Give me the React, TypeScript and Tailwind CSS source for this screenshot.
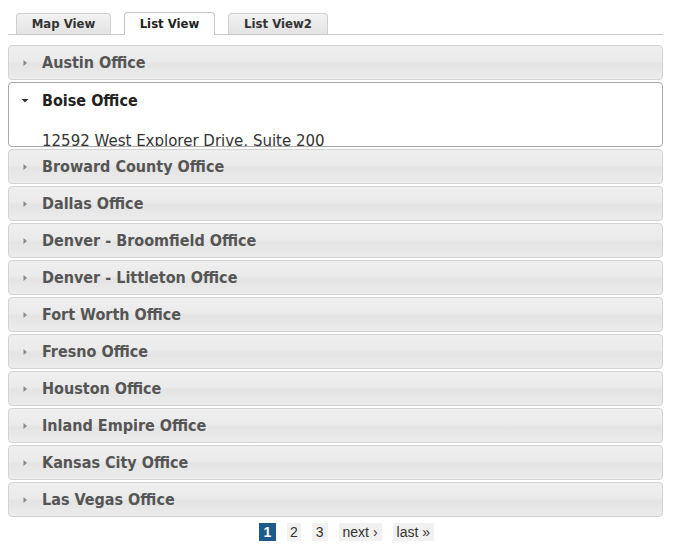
import React from "react";

const offices = [
  "Austin Office",
  "Boise Office",
  "Broward County Office",
  "Dallas Office",
  "Denver - Broomfield Office",
  "Denver - Littleton Office",
  "Fort Worth Office",
  "Fresno Office",
  "Houston Office",
  "Inland Empire Office",
  "Kansas City Office",
  "Las Vegas Office",
];

const cond = { fontFamily: '"DejaVu Sans Condensed", "DejaVu Sans", Verdana, sans-serif' };
const dv = { fontFamily: '"DejaVu Sans", Verdana, sans-serif' };

function RightTri() {
  return (
    <svg width="8" height="8" viewBox="0 0 8 8" className="shrink-0">
      <path d="M2.5 1 L6 4 L2.5 7 Z" fill="#8a8a8a" />
    </svg>
  );
}

function DownTri() {
  return (
    <svg width="8" height="8" viewBox="0 0 8 8" className="shrink-0">
      <path d="M0.5 2 L7.5 2 L4 5.5 Z" fill="#333" />
    </svg>
  );
}

export default function App() {
  return (
    <div className="w-[674px] h-[556px] bg-white" style={dv}>
      <div className="pl-[8px] pr-[11px] pt-[13px]">
        {/* Tabs */}
        <div className="flex items-end gap-[13px] pl-[8px] border-b border-[#c9c9c9] h-[22px]" style={cond}>
          <div className="h-[21px] w-[95px] flex items-center justify-center rounded-t-[4px] border border-b-0 border-[#cfcfcf] bg-gradient-to-b from-[#f2f2f2] to-[#e3e3e3] text-[13px] font-bold text-[#333]">
            Map View
          </div>
          <div className="h-[23px] w-[91px] -mb-px flex items-center justify-center rounded-t-[4px] border border-b-0 border-[#c4c4c4] bg-white text-[13px] font-bold text-[#222]">
            List View
          </div>
          <div className="h-[21px] w-[100px] flex items-center justify-center rounded-t-[4px] border border-b-0 border-[#cfcfcf] bg-gradient-to-b from-[#f2f2f2] to-[#e3e3e3] text-[13px] font-bold text-[#333]">
            List View2
          </div>
        </div>

        {/* Accordion */}
        <div className="mt-[10px] flex flex-col gap-[2px]">
          {offices.map((o) =>
            o === "Boise Office" ? (
              <div
                key={o}
                className="h-[65px] overflow-hidden rounded-[4px] border border-[#aaaaaa] bg-white"
              >
                <div className="h-[35px] flex items-center pl-[12px] gap-[13px]">
                  <DownTri />
                  <span className="text-[16px] font-bold text-[#222]" style={cond}>{o}</span>
                </div>
                <div className="pl-[33px] pt-[14px] text-[15px] text-[#333] leading-[18px]" style={dv}>
                  12592 West Explorer Drive, Suite 200
                </div>
              </div>
            ) : (
              <div
                key={o}
                className="h-[35px] flex items-center pl-[12px] gap-[13px] rounded-[4px] border border-[#d3d3d3] bg-[linear-gradient(to_bottom,#efefef_0%,#ebebeb_45%,#e4e4e4_55%,#ececec_100%)]"
              >
                <RightTri />
                <span className="text-[16px] font-bold text-[#555] pt-[1px]" style={cond}>{o}</span>
              </div>
            )
          )}
        </div>

        {/* Pagination */}
        <div
          className="mt-[6px] flex justify-center items-center gap-[11px] text-[14px] text-[#333] pl-[22px]"
          style={{ fontFamily: '"Liberation Sans", Arial, sans-serif' }}
        >
          <span className="h-[18px] w-[17px] flex items-center justify-center bg-[#1d5b8a] text-white font-bold">1</span>
          <span className="h-[18px] px-[3px] flex items-center bg-[#f1f1f1]">2</span>
          <span className="h-[18px] px-[4px] flex items-center bg-[#f1f1f1]">3</span>
          <span className="h-[18px] px-[4px] flex items-center bg-[#f1f1f1]">next ›</span>
          <span className="h-[18px] px-[4px] flex items-center bg-[#f1f1f1]">last »</span>
        </div>
      </div>
    </div>
  );
}
